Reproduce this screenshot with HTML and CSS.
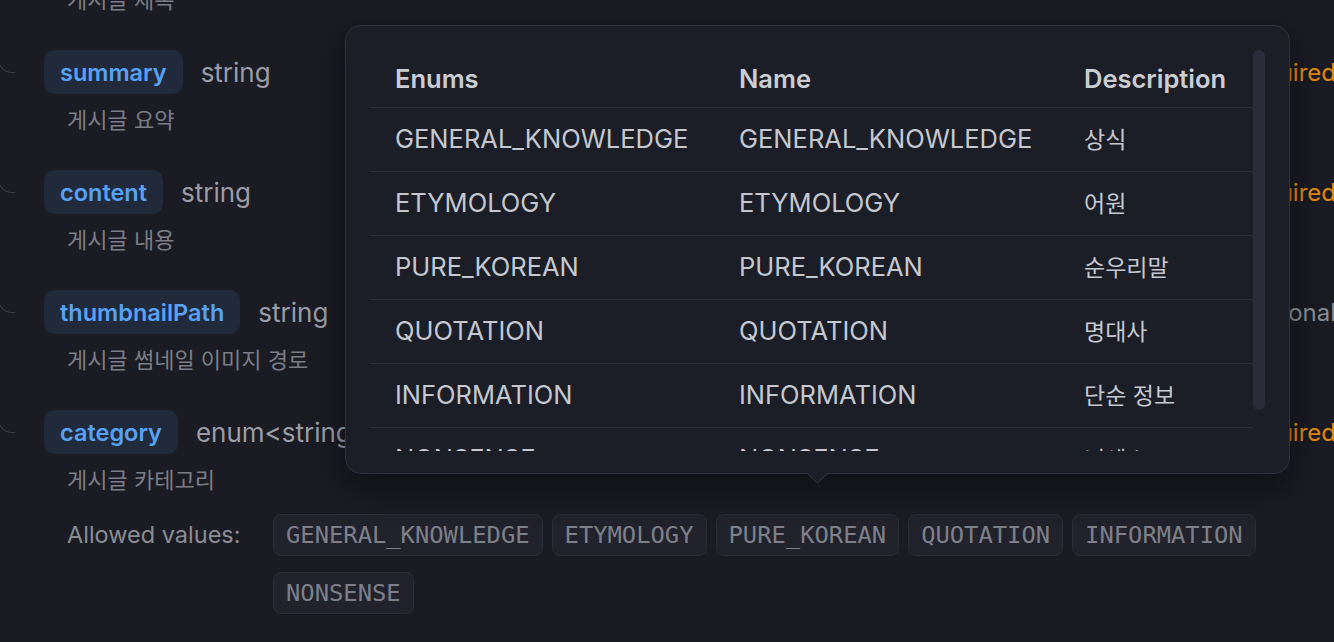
FILE: index.html
```html
<!DOCTYPE html>
<html lang="ko">
<head>
    <meta charset="UTF-8">
    <meta name="viewport" content="width=device-width, initial-scale=1.0">
    <title>Post schema</title>
    <link rel="stylesheet" href="styles.css">
</head>
<body>

<div class="fields">
    <p class="field-desc first">게시글 제목</p>

    <div class="field">
        <div class="field-row">
            <span class="branch"></span>
            <span class="field-name">summary</span>
            <span class="field-type">string</span>
            <span class="field-flag required">required</span>
        </div>
        <p class="field-desc">게시글 요약</p>
    </div>

    <div class="field">
        <div class="field-row">
            <span class="branch"></span>
            <span class="field-name">content</span>
            <span class="field-type">string</span>
            <span class="field-flag required">required</span>
        </div>
        <p class="field-desc">게시글 내용</p>
    </div>

    <div class="field">
        <div class="field-row">
            <span class="branch"></span>
            <span class="field-name">thumbnailPath</span>
            <span class="field-type">string</span>
            <span class="field-flag">optional</span>
        </div>
        <p class="field-desc">게시글 썸네일 이미지 경로</p>
    </div>

    <div class="field">
        <div class="field-row">
            <span class="branch"></span>
            <span class="field-name">category</span>
            <span class="field-type">enum&lt;string&gt;</span>
            <span class="field-flag required">required</span>
        </div>
        <p class="field-desc">게시글 카테고리</p>
        <div class="allowed">
            <span class="allowed-label">Allowed values:</span>
            <div class="chips">
                <code class="chip">GENERAL_KNOWLEDGE</code>
                <code class="chip">ETYMOLOGY</code>
                <code class="chip">PURE_KOREAN</code>
                <code class="chip">QUOTATION</code>
                <code class="chip">INFORMATION</code>
                <code class="chip">NONSENSE</code>
            </div>
        </div>
    </div>
</div>

<!-- enum popover for category -->
<div class="popover">
    <div class="enum-list">
        <div class="enum-row enum-head">
            <span>Enums</span>
            <span>Name</span>
            <span>Description</span>
        </div>
        <div class="enum-row">
            <span>GENERAL_KNOWLEDGE</span>
            <span>GENERAL_KNOWLEDGE</span>
            <span class="ko">상식</span>
        </div>
        <div class="enum-row">
            <span>ETYMOLOGY</span>
            <span>ETYMOLOGY</span>
            <span class="ko">어원</span>
        </div>
        <div class="enum-row">
            <span>PURE_KOREAN</span>
            <span>PURE_KOREAN</span>
            <span class="ko">순우리말</span>
        </div>
        <div class="enum-row">
            <span>QUOTATION</span>
            <span>QUOTATION</span>
            <span class="ko">명대사</span>
        </div>
        <div class="enum-row">
            <span>INFORMATION</span>
            <span>INFORMATION</span>
            <span class="ko">단순 정보</span>
        </div>
        <div class="enum-row">
            <span>NONSENSE</span>
            <span>NONSENSE</span>
            <span class="ko">넌센스</span>
        </div>
    </div>
    <div class="scroll-thumb"></div>
</div>

</body>
</html>
```

FILE: styles.css
```css
body {
    margin: 0;
    padding: 0;
    background-color: #1a1b23;
    font-family: Inter, "Noto Sans CJK KR", sans-serif;
    overflow: hidden;
}
p {
    margin: 0;
}
.fields {
    width: 1336px;
}
.field {
    margin-top: 36px;
}
.field-row {
    display: flex;
    align-items: center;
    height: 44px;
}
.branch {
    align-self: flex-start;
    width: 16px;
    height: 22px;
    margin-left: -2px;
    margin-right: 29px;
    border-left: 1px solid #3a3c47;
    border-bottom: 1px solid #3a3c47;
    border-bottom-left-radius: 14px;
}
.field-name {
    display: flex;
    align-items: center;
    height: 44px;
    padding: 0 16px;
    background-color: #212a3b;
    border-radius: 10px;
    color: #58a2f5;
    font-size: 23.5px;
    font-weight: 600;
}
.field-type {
    margin-left: 18px;
    color: #9a9da7;
    font-size: 26px;
}
.field-flag {
    margin-left: auto;
    color: #8a8d96;
    font-size: 24px;
}
.field-flag.required {
    color: #e8890c;
}
.field-desc {
    margin-top: 12px;
    padding-left: 67px;
    line-height: 28px;
    color: #7b7e87;
    font-size: 22px;
}
.field-desc.first {
    margin-top: -14px;
}
.allowed {
    display: flex;
    align-items: flex-start;
    margin-top: 20px;
    padding-left: 67px;
}
.allowed-label {
    width: 206px;
    line-height: 42px;
    color: #8a8d96;
    font-size: 23.5px;
}
.chips {
    display: flex;
    flex-wrap: wrap;
    gap: 16px 9px;
    width: 1000px;
}
.chip {
    box-sizing: border-box;
    height: 42px;
    line-height: 40px;
    padding: 0 12px;
    background-color: #21222c;
    border: 1px solid #2b2d38;
    border-radius: 8px;
    color: #7d8089;
    font-family: "DejaVu Sans Mono", monospace;
    font-size: 23.8px;
}

/* popover with enum table */
.popover {
    position: absolute;
    left: 345px;
    top: 25px;
    display: flex;
    align-items: flex-start;
    box-sizing: border-box;
    width: 945px;
    height: 449px;
    padding: 24px 24px 0;
    background-color: #1c1e27;
    border: 1px solid #2e303b;
    border-radius: 16px;
    box-shadow: 0 12px 36px rgba(0, 0, 0, 0.45);
}
.popover::after {
    content: "";
    position: absolute;
    left: 464px;
    bottom: -8px;
    width: 14px;
    height: 14px;
    background-color: #1c1e27;
    border-right: 1px solid #2e303b;
    border-bottom: 1px solid #2e303b;
    transform: rotate(45deg);
}
.enum-list {
    width: 883px;
    height: 401px;
    overflow: hidden;
}
.scroll-thumb {
    width: 12px;
    height: 360px;
    background-color: #2a2d39;
    border-radius: 6px;
}
.enum-row {
    display: grid;
    grid-template-columns: 344px 345px 1fr;
    align-items: center;
    box-sizing: border-box;
    height: 64px;
    border-bottom: 1px solid #2c2e3a;
    color: #c5c8cf;
    font-size: 25.5px;
}
.enum-row span {
    padding-left: 25px;
    padding-bottom: 3px;
}
.enum-row .ko {
    font-size: 23px;
}
.enum-head {
    height: 58px;
    color: #cacdd4;
    font-weight: 600;
}
.enum-head span {
    padding-bottom: 0;
}
```
